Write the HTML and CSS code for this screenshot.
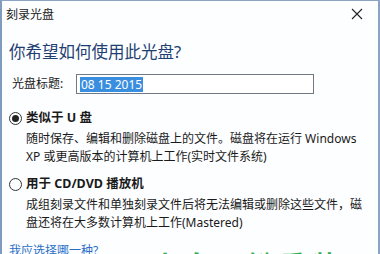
FILE: index.html
```html
<!DOCTYPE html>
<html lang="zh-CN">
<head>
  <meta charset="UTF-8" />
  <title>刻录光盘</title>
  <link rel="stylesheet" href="styles.css">
</head>
<body>
  <div class="window">
    <div class="titlebar">
      <span class="title">刻录光盘</span>
      <span class="close">
        <svg width="12" height="12" viewBox="0 0 12 12"><path d="M1 1 L11 11 M11 1 L1 11" stroke="#222" stroke-width="1.1" fill="none"/></svg>
      </span>
    </div>

    <div class="content">
      <h1 class="heading">你希望如何使用此光盘?</h1>

      <div class="title-row">
        <label class="label">光盘标题:</label>
        <div class="input"><span class="selected">08 15 2015</span></div>
      </div>

      <div class="option">
        <div class="option-head">
          <span class="radio checked"></span>
          <span class="option-name">类似于 U 盘</span>
        </div>
        <div class="option-desc">
          随时保存、编辑和删除磁盘上的文件。磁盘将在运行 Windows<br>
          XP 或更高版本的计算机上工作(实时文件系统)
        </div>
      </div>

      <div class="option">
        <div class="option-head">
          <span class="radio"></span>
          <span class="option-name">用于 CD/DVD 播放机</span>
        </div>
        <div class="option-desc">
          成组刻录文件和单独刻录文件后将无法编辑或删除这些文件，磁<br>
          盘还将在大多数计算机上工作(Mastered)
        </div>
      </div>

      <a class="help-link" href="#">我应选择哪一种?</a>
    </div>

    <div class="watermark">小白一键重装</div>
  </div>
</body>
</html>
```

FILE: styles.css
```css
* {
  margin: 0;
  padding: 0;
  box-sizing: border-box;
}

body {
  width: 380px;
  height: 254px;
  overflow: hidden;
  font-family: "Noto Sans", "Noto Sans CJK SC", sans-serif;
  font-size: 12px;
  color: #1a1a1a;
  background: #fff;
}

.window {
  position: relative;
  width: 380px;
  height: 254px;
  background: #fdfeff;
  border-top: 1px solid #8aa4c4;
  border-left: 2px solid #7f9bbd;
  border-right: 2px solid #8aa4c4;
  overflow: hidden;
}

.titlebar {
  height: 27px;
  display: flex;
  justify-content: space-between;
  align-items: center;
  padding: 0 15px 0 4px;
}

.title {
  font-size: 12px;
  line-height: 27px;
}

.close {
  display: flex;
  margin-top: -1px;
}

.content {
  padding-left: 7px;
}

.heading {
  margin-top: 12px;
  font-size: 16.5px;
  font-weight: normal;
  line-height: 24px;
  color: #1f3f72;
}

.title-row {
  display: flex;
  align-items: center;
  margin-top: 10px;
  height: 20px;
}

.label {
  width: 67px;
  padding-left: 3px;
  line-height: 20px;
}

.input {
  width: 238px;
  height: 20px;
  border: 1px solid #6f7a86;
  background: #fff;
  padding: 2px 3px;
  display: flex;
  align-items: center;
}

.selected {
  background: #3a8ee0;
  color: #fff;
  font-size: 12px;
  line-height: 15px;
  padding: 0 1px;
}

.option {
  margin-top: 15px;
}

.option + .option {
  margin-top: 9px;
}

.option-head {
  display: flex;
  align-items: center;
  height: 18px;
}

.radio {
  width: 13px;
  height: 13px;
  border: 1px solid #333;
  border-radius: 50%;
  margin-right: 4px;
  display: flex;
  align-items: center;
  justify-content: center;
}

.radio.checked::after {
  content: '';
  width: 7px;
  height: 7px;
  border-radius: 50%;
  background: #222;
}

.option-name {
  font-weight: bold;
  font-size: 12.5px;
  line-height: 18px;
}

.option-desc {
  margin-top: 3px;
  padding-left: 17px;
  line-height: 18px;
  white-space: nowrap;
}

.help-link {
  display: block;
  margin-top: 10px;
  line-height: 18px;
  color: #2a6ec8;
  text-decoration: none;
}

.watermark {
  position: absolute;
  left: 150px;
  top: 249px;
  font-size: 26px;
  font-weight: bold;
  letter-spacing: 6px;
  color: #2fae4e;
  line-height: 30px;
}
```
